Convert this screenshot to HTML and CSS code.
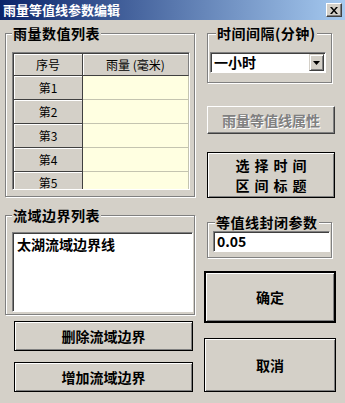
FILE: index.html
```html
<!DOCTYPE html>
<html>
	<head>
		<meta charset="UTF-8">
		<title>雨量等值线参数编辑</title>
		<link rel="stylesheet" href="styles.css">
	</head>
	<body>
		<div class="window">
			<div class="titlebar">
				<span class="title">雨量等值线参数编辑</span>
				<span class="close">
					<svg width="8" height="7" viewBox="0 0 8 7"><path d="M0 0h2l2 2.5L6 0h2L5 3.5 8 7H6L4 4.5 2 7H0l3-3.5z" fill="#000"/></svg>
				</span>
			</div>
			<div class="body">
				<div class="col_left">
					<div class="group g_rain">
						<span class="legend">雨量数值列表</span>
						<div class="grid_wrap">
							<div class="grid">
								<div class="hd">序号</div>
								<div class="hd">雨量 (毫米)</div>
								<div class="rh">第1</div><div class="cell"></div>
								<div class="rh">第2</div><div class="cell"></div>
								<div class="rh">第3</div><div class="cell"></div>
								<div class="rh">第4</div><div class="cell"></div>
								<div class="rh rh_last">第5</div><div class="cell cell_last"></div>
							</div>
						</div>
					</div>
					<div class="group g_basin">
						<span class="legend">流域边界列表</span>
						<div class="listbox">
							<div class="item">太湖流域边界线</div>
						</div>
					</div>
					<button class="btn btn_left btn_del">删除流域边界</button>
					<button class="btn btn_left btn_add">增加流域边界</button>
				</div>
				<div class="col_right">
					<div class="group g_time">
						<span class="legend">时间间隔(分钟)</span>
						<div class="select">
							<span class="select_text">一小时</span>
							<span class="arrow">
								<svg width="7" height="4" viewBox="0 0 7 4"><path d="M0 0h7L3.5 4z" fill="#000"/></svg>
							</span>
						</div>
					</div>
					<button class="btn btn_disabled">雨量等值线属性</button>
					<button class="btn btn_title">选择时间<br>区间标题</button>
					<div class="group g_param">
						<span class="legend">等值线封闭参数</span>
						<div class="input">0.05</div>
					</div>
					<button class="btn btn_default">确定</button>
					<button class="btn btn_cancel">取消</button>
				</div>
			</div>
		</div>
	</body>
</html>
```

FILE: styles.css
```css
body {
    margin: 0;
    padding: 0;
    background: #d4d0c8;
    font-family: "Noto Sans CJK SC", "Liberation Sans", sans-serif;
}

.window {
    width: 345px;
    height: 403px;
    overflow: hidden;
    background: #d4d0c8;
}

.titlebar {
    height: 20px;
    display: flex;
    align-items: center;
    justify-content: space-between;
    padding: 0 3px;
    background: linear-gradient(to right, #0a246a, #a6caf0);
    box-sizing: border-box;
}

.title {
    color: #fff;
    font-size: 13px;
    font-weight: bold;
    line-height: 20px;
}

.close {
    width: 16px;
    height: 14px;
    box-sizing: border-box;
    background: #d4d0c8;
    border: 1px solid;
    border-color: #fff #404040 #404040 #fff;
    box-shadow: inset -1px -1px 0 #808080;
    display: flex;
    align-items: center;
    justify-content: center;
}

.body {
    display: flex;
    gap: 9px;
    padding-left: 5px;
}

.col_left {
    width: 190px;
    display: flex;
    flex-direction: column;
}

.col_right {
    width: 132px;
    display: flex;
    flex-direction: column;
}

/* group box */
.group {
    box-sizing: border-box;
    border: 1px solid #808080;
    box-shadow: inset 1px 1px 0 #fff, 1px 1px 0 #fff;
}

.legend {
    display: block;
    width: fit-content;
    height: 15px;
    margin-top: -8px;
    padding: 0 1px;
    background: #d4d0c8;
    font-size: 14px;
    font-weight: bold;
    line-height: 15px;
    letter-spacing: 0.5px;
    color: #000;
}

.g_rain {
    margin-top: 13px;
    height: 164px;
    padding: 0 4px 0 6px;
}

.g_basin {
    margin-top: 18px;
    height: 100px;
    padding: 0 0 0 6px;
}

.g_time {
    margin: 13px 0 0 3px;
    width: 125px;
    height: 50px;
    padding-left: 2px;
}

.g_param {
    margin: 24px 0 0 3px;
    width: 125px;
    height: 36px;
    padding-left: 5px;
}

.g_time .legend {
    margin-left: 6px;
}

.g_param .legend {
    margin-left: 2px;
}

/* sunken controls */
.grid_wrap,
.listbox,
.select,
.input {
    box-sizing: border-box;
    border: 1px solid;
    border-color: #808080 #fff #fff #808080;
}

.grid_wrap {
    margin-top: 11px;
    width: 178px;
    height: 138px;
    overflow: hidden;
}

.grid {
    display: grid;
    grid-template-columns: 69px 1fr;
    grid-template-rows: 22px repeat(4, 24px) 20px;
    border-top: 1px solid #404040;
    border-left: 1px solid #404040;
    font-size: 12px;
    color: #000;
}

.hd,
.rh {
    background: #d4d0c8;
    box-shadow: inset 1px 1px 0 #fff;
    border-right: 1px solid #404040;
    border-bottom: 1px solid #404040;
    display: flex;
    align-items: center;
    justify-content: center;
}

.hd:nth-child(2) {
    border-right-color: #808080;
}

.cell {
    background: #ffffe1;
    border-bottom: 1px solid #c4c4b0;
    border-right: 1px solid #c4c4b0;
}

.rh_last,
.cell_last {
    border-bottom: 0;
}

.listbox {
    margin-top: 9px;
    width: 181px;
    height: 80px;
    background: #fff;
    box-shadow: inset 1px 1px 0 #404040;
    padding: 2px 0 0 4px;
}

.item {
    font-size: 14px;
    font-weight: bold;
    line-height: 18px;
}

.select {
    margin-top: 11px;
    width: 116px;
    height: 21px;
    background: #fff;
    box-shadow: inset 1px 1px 0 #404040;
    display: flex;
    align-items: center;
    justify-content: space-between;
    padding: 1px 1px 1px 3px;
}

.select_text {
    font-size: 14px;
    font-weight: bold;
    line-height: 17px;
}

.arrow {
    width: 15px;
    height: 17px;
    box-sizing: border-box;
    background: #d4d0c8;
    border: 1px solid;
    border-color: #d4d0c8 #404040 #404040 #d4d0c8;
    box-shadow: inset 1px 1px 0 #fff, inset -1px -1px 0 #808080;
    display: flex;
    align-items: center;
    justify-content: center;
}

.input {
    margin-top: 1px;
    width: 117px;
    height: 21px;
    background: #fff;
    box-shadow: inset 1px 1px 0 #404040;
    padding: 0 3px;
    font-size: 14px;
    font-weight: bold;
    line-height: 19px;
}

/* buttons */
.btn {
    box-sizing: border-box;
    background: #d4d0c8;
    border: 1px solid #000;
    box-shadow: inset 1px 1px 0 #fff, inset -1px -1px 0 #808080;
    font-family: "Noto Sans CJK SC", "Liberation Sans", sans-serif;
    font-size: 14px;
    font-weight: bold;
    color: #000;
    padding: 0;
    margin: 0;
}

.btn_left {
    margin-left: 9px;
    width: 179px;
    height: 30px;
}

.btn_del {
    margin-top: 6px;
}

.btn_add {
    margin-top: 11px;
}

.btn_disabled {
    margin: 23px 0 0 3px;
    width: 128px;
    height: 28px;
    border-color: #fff #404040 #404040 #fff;
    box-shadow: inset -1px -1px 0 #808080;
    color: #808080;
    text-shadow: 1px 1px 0 #fff;
}

.btn_title {
    margin: 18px 0 0 3px;
    width: 128px;
    height: 46px;
    line-height: 20px;
    letter-spacing: 5px;
    padding-left: 5px;
}

.btn_default {
    margin-top: 13px;
    width: 132px;
    height: 52px;
    border-width: 2px;
}

.btn_cancel {
    margin-top: 15px;
    width: 132px;
    height: 54px;
}
```
